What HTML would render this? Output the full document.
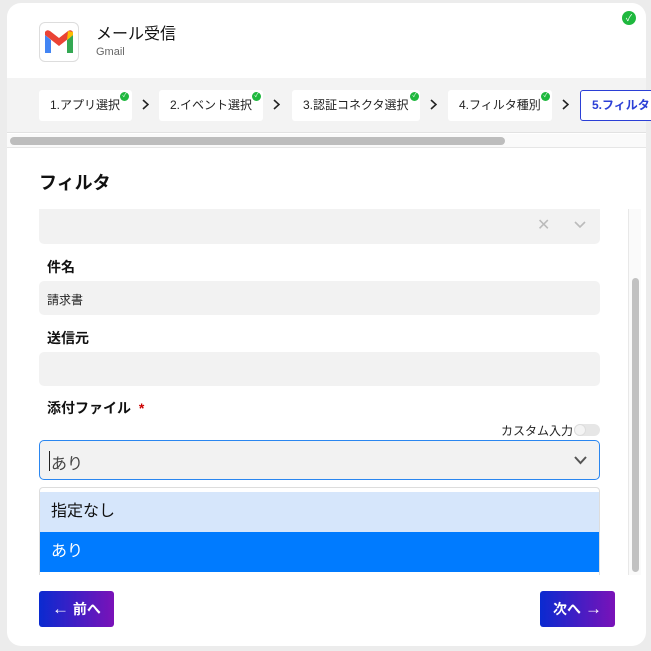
<!DOCTYPE html>
<html><head><meta charset="utf-8"><style>
*{margin:0;padding:0;box-sizing:border-box}
body{width:651px;height:651px;background:#ececec;font-family:"Liberation Sans","Noto Sans CJK JP",sans-serif;position:relative;overflow:hidden}
.card{position:absolute;left:7px;top:3px;width:639px;height:643px;background:#fff;border-radius:14px;overflow:hidden}
.a{position:absolute}
.step{position:absolute;top:90px;height:31px;background:#fff;border-radius:3px;font-size:12px;line-height:31px;padding-left:11px;color:#222}
.ck{position:absolute;width:9px;height:9px;border-radius:50%;background:#1fb83e;color:#fff;font-size:6px;line-height:9px;text-align:center}
.arr{position:absolute;top:99px}
.lbl{position:absolute;left:47px;font-size:14px;font-weight:bold;color:#111}
.fld{position:absolute;left:39px;width:561px;background:#f2f2f2;border-radius:5px}
.btn{position:absolute;top:591px;width:75px;height:36px;border-radius:3px;background:linear-gradient(90deg,#0a2ad0,#7a12b8);color:#fff;font-weight:bold;font-size:14px;line-height:36px;text-align:center}
.btn b{font-size:17px}
</style></head><body>
<div class="card"></div>
<div class="a" style="left:39px;top:22px;width:40px;height:40px;border:1px solid #ddd;border-radius:6px;background:#fff">
<svg width="38" height="38" viewBox="0 0 38 38"><path d="M5 12 L5 30 L11 30 L11 17 Z" fill="#4285f4"/><path d="M27 17 L27 30 L33 30 L33 12 Z" fill="#34a853"/><path d="M5 12 L19 23 L33 12 L33 9 Q31 6 28 8 L19 15 L10 8 Q7 6 5 9 Z" fill="#ea4335"/><path d="M28 8 L33 9 L33 12 L27 17 Z" fill="#fbbc04"/></svg></div>
<div class="a" style="left:96px;top:25px;font-size:16px;line-height:20px;color:#111">メール受信</div>
<div class="a" style="left:96px;top:46px;font-size:11px;line-height:13px;color:#666">Gmail</div>
<div class="a" style="left:622px;top:11px;width:14px;height:14px;border-radius:50%;background:#1fb83e;color:#fff;font-size:9px;line-height:14px;text-align:center">✓</div>
<div class="a" style="left:7px;top:78px;width:639px;height:55px;background:#f3f3f3;border-bottom:1px solid #e2e2e2"></div>
<div class="step" style="left:39px;width:93px">1.アプリ選択</div><div class="ck" style="left:120px;top:92px">✓</div>
<svg class="arr" style="left:142px" width="7" height="11"><path d="M1 1 L6 5.5 L1 10" fill="none" stroke="#222" stroke-width="1.6"/></svg>
<div class="step" style="left:159px;width:104px">2.イベント選択</div><div class="ck" style="left:252px;top:92px">✓</div>
<svg class="arr" style="left:273px" width="7" height="11"><path d="M1 1 L6 5.5 L1 10" fill="none" stroke="#222" stroke-width="1.6"/></svg>
<div class="step" style="left:292px;width:128px">3.認証コネクタ選択</div><div class="ck" style="left:410px;top:92px">✓</div>
<svg class="arr" style="left:430px" width="7" height="11"><path d="M1 1 L6 5.5 L1 10" fill="none" stroke="#222" stroke-width="1.6"/></svg>
<div class="step" style="left:448px;width:104px">4.フィルタ種別</div><div class="ck" style="left:541px;top:92px">✓</div>
<svg class="arr" style="left:562px" width="7" height="11"><path d="M1 1 L6 5.5 L1 10" fill="none" stroke="#222" stroke-width="1.6"/></svg>
<div class="step" style="left:580px;width:80px;border:1px solid #2b3fd6;color:#2b3fd6;font-weight:bold;line-height:29px">5.フィルタ</div>
<div class="a" style="left:7px;top:134px;width:639px;height:14px;background:#fafafa;border-bottom:1px solid #e6e6e6"></div>
<div class="a" style="left:10px;top:137px;width:495px;height:8px;border-radius:4px;background:#bdbdbd"></div>
<div class="a" style="left:39px;top:169px;font-size:18px;font-weight:bold;color:#111">フィルタ</div>
<div class="fld" style="top:209px;height:35px;border-radius:0 0 5px 5px"></div>
<div class="a" style="left:537px;top:215px;font-size:16px;color:#bbb">✕</div>
<svg class="a" style="left:574px;top:221px" width="12" height="8"><path d="M1 1 L6 6 L11 1" fill="none" stroke="#bbb" stroke-width="1.6"/></svg>
<div class="lbl" style="top:257px">件名</div>
<div class="fld" style="top:281px;height:34px"></div>
<div class="a" style="left:47px;top:291px;font-size:12px;color:#222">請求書</div>
<div class="lbl" style="top:328px">送信元</div>
<div class="fld" style="top:352px;height:34px"></div>
<div class="lbl" style="top:398px">添付ファイル <span style="color:#c00;margin-left:4px">*</span></div>
<div class="a" style="left:501px;top:422px;font-size:12px;color:#222">カスタム入力</div>
<div class="a" style="left:574px;top:424px;width:26px;height:12px;border-radius:6px;background:#e6e6e6"><div style="width:12px;height:12px;border-radius:50%;background:#f4f4f4;border:1px solid #ddd"></div></div>
<div class="fld" style="top:440px;height:40px;border:1px solid #2a86f0"></div>
<div class="a" style="left:49px;top:451px;width:1px;height:20px;background:#222"></div>
<div class="a" style="left:51px;top:450px;font-size:16px;color:#444">あり</div>
<svg class="a" style="left:574px;top:456px" width="13" height="9"><path d="M1 1 L6.5 7 L12 1" fill="none" stroke="#555" stroke-width="2"/></svg>
<div class="a" style="left:39px;top:487px;width:561px;height:88px;border:1px solid #ddd;border-bottom:none;border-radius:4px 4px 0 0;background:#fff;overflow:hidden">
<div style="position:absolute;top:4px;left:0;right:0;height:40px;background:#d6e6fb;font-size:16px;line-height:40px;padding-left:11px;color:#111">指定なし</div>
<div style="position:absolute;top:44px;left:0;right:0;height:40px;background:#007bff;font-size:16px;line-height:40px;padding-left:11px;color:#fff">あり</div></div>
<div class="a" style="left:628px;top:209px;width:13px;height:366px;background:#fafafa;border-left:1px solid #e8e8e8"></div>
<div class="a" style="left:632px;top:278px;width:7px;height:294px;border-radius:4px;background:#c1c1c1"></div>
<div class="btn" style="left:39px"><b>←</b> 前へ</div>
<div class="btn" style="left:540px">次へ <b>→</b></div>
</body></html>
